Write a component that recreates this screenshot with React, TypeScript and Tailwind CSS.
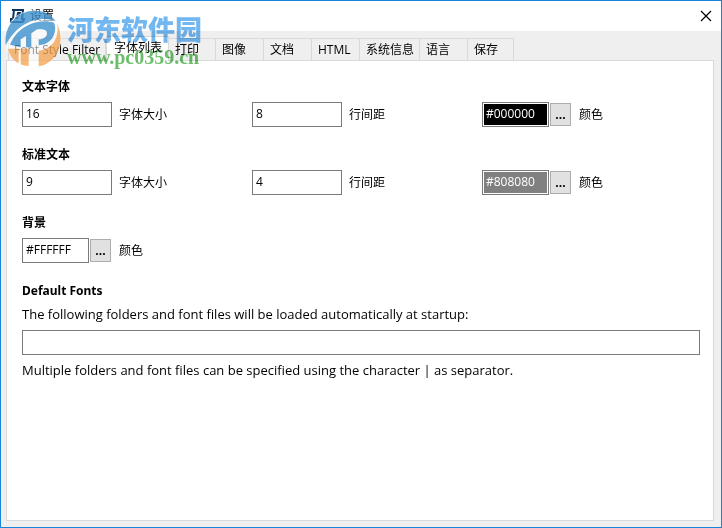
import React from 'react';

const tabs = [
  { name: 'Font Style Filter', width: 'w-[98px]' },
  { name: '字体列表', width: 'w-[63px]', active: true },
  { name: '打印', width: 'w-[47px]' },
  { name: '图像', width: 'w-[48px]' },
  { name: '文档', width: 'w-[48px]' },
  { name: 'HTML', width: 'w-[48px]' },
  { name: '系统信息', width: 'w-[60px]' },
  { name: '语言', width: 'w-[48px]' },
  { name: '保存', width: 'w-[46px]' },
];

const NumberField = ({ id, label, value }: { id: string; label: string; value: string }) => (
  <div className="flex items-center gap-[7px]">
    <input
      id={id}
      defaultValue={value}
      className="h-[25px] w-[90px] border border-[#7a7a7a] bg-white px-[3px] pb-[2px] outline-none"
    />
    <label htmlFor={id}>{label}</label>
  </div>
);

const ColorField = ({ id, value, tone }: { id: string; value: string; tone: string }) => (
  <div className="flex items-center">
    <div className="h-[25px] w-[67px] border border-[#7a7a7a] bg-white p-px">
      <input
        id={id}
        defaultValue={value}
        className={`block h-full w-full px-[2px] pb-[2px] outline-none ${tone}`}
      />
    </div>
    <button
      type="button"
      aria-label="选择颜色"
      className="ml-px h-[23px] w-[21px] border border-[#adadad] bg-[#e1e1e1] font-bold leading-4"
    >
      ...
    </button>
    <label htmlFor={id} className="ml-2">颜色</label>
  </div>
);

const Watermark = () => (
  <>
    <svg
      width="57"
      height="57"
      viewBox="15 30 171 171"
      className="pointer-events-none absolute left-1 top-[9px] z-10 opacity-80"
      aria-hidden="true"
    >
      <circle cx="100" cy="115" r="85" fill="#fff" fillOpacity="0.7" />
      <path d="M17 136C10 72 58 30 105 32c28 0 50 12 62 32C138 52 104 56 76 72 48 88 30 110 17 136z" fill="#3f93cf" />
      <path d="M30 134C42 106 62 84 92 72c24-10 50-11 70-4 8 18 2 42-14 56-10 8-20 11-32 12v-18c16 0 25-8 25-18 0-9-8-12-20-12h-9l-18 12v42H78v-34l-16 10v24z" fill="#3f93cf" />
      <path d="M172 72c20 44 10 96-34 120-8 4-16 6-22 7v-47c38-3 62-34 56-80z" fill="#f6a85a" />
      <path d="M24 146h32v44c-16-9-28-26-32-44zM62 146h24v52c-9 0-17-2-24-5z" fill="#f6a85a" />
    </svg>
    <div className="pointer-events-none absolute left-[66px] top-3 z-10 opacity-80 mix-blend-multiply">
      <div className="font-['Noto_Sans_CJK_SC',sans-serif] text-[27px] font-black leading-8 text-[#4fa5ed]">河东软件园</div>
      <div className="font-['Liberation_Serif',serif] text-[20px] font-bold leading-6 text-[#45ad45]">www.pc0359.cn</div>
    </div>
  </>
);

export default function App() {
  return (
    <div className="relative flex min-h-screen flex-col border border-[#1883d7] bg-[#efefef] font-['Open_Sans','Noto_Sans_CJK_SC',sans-serif] text-[12px] leading-4 text-black">
      {/* Title bar */}
      <header className="flex h-[30px] items-center bg-white pl-2 pr-[9px]">
        <svg width="17" height="16" viewBox="0 0 17 16" aria-hidden="true">
          <path d="M3 2h12M5 2L4 11M14 2l-1 9M1 14h13M1 11h3M2 11v3M12 11h4M15 11l-1 3" fill="none" stroke="#0b3460" strokeWidth="2" />
          <path d="M12 5H9l-1 5M8 7h3M6 10h3" fill="none" stroke="#0b3460" strokeWidth="2" />
        </svg>
        <h1 className="ml-1">设置</h1>
        <button type="button" aria-label="关闭" className="ml-auto">
          <svg width="12" height="12" viewBox="0 0 12 12">
            <path d="M1 1l10 10M11 1L1 11" stroke="#000" strokeWidth="1.2" />
          </svg>
        </button>
      </header>

      {/* Tabs */}
      <div role="tablist" className="flex items-end pl-[7px] pt-[5px]">
        {tabs.map((tab) => (
          <button
            key={tab.name}
            type="button"
            role="tab"
            aria-selected={!!tab.active}
            className={`shrink-0 whitespace-nowrap border-[#d9d9d9] text-left ${tab.width} ${
              tab.active
                ? 'z-1 -mb-px h-[25px] border-x border-t bg-white pb-[2px] pl-[7px]'
                : 'h-[22px] border-r border-t pl-[6px] first:border-l first:pl-[5px]'
            }`}
          >
            {tab.name}
          </button>
        ))}
      </div>

      {/* Font list settings */}
      <main className="mb-[6px] ml-[5px] mr-[7px] grow border border-[#d9d9d9] bg-white pb-4 pl-[15px] pr-[13px] pt-[18px]">
        <section>
          <h2 className="font-bold">文本字体</h2>
          <div className="mt-[7px] grid grid-cols-[230px_230px_1fr]">
            <NumberField id="text-size" label="字体大小" value="16" />
            <NumberField id="text-spacing" label="行间距" value="8" />
            <ColorField id="text-color" value="#000000" tone="bg-black text-white" />
          </div>
        </section>

        <section className="mt-5">
          <h2 className="font-bold">标准文本</h2>
          <div className="mt-[7px] grid grid-cols-[230px_230px_1fr]">
            <NumberField id="default-size" label="字体大小" value="9" />
            <NumberField id="default-spacing" label="行间距" value="4" />
            <ColorField id="default-color" value="#808080" tone="bg-[#808080] text-white" />
          </div>
        </section>

        <section className="mt-5">
          <h2 className="font-bold">背景</h2>
          <div className="mt-[7px]">
            <ColorField id="background" value="#FFFFFF" tone="bg-white text-black" />
          </div>
        </section>

        <section className="mt-5">
          <h2 className="font-['Noto_Sans',sans-serif] font-bold">Default Fonts</h2>
          <label htmlFor="font-folders" className="mt-[7px] block text-[13px]">
            The following folders and font files will be loaded automatically at startup:
          </label>
          <input
            id="font-folders"
            className="mt-2 block h-[25px] w-full border border-[#7a7a7a] bg-white px-[3px] outline-none"
          />
          <p className="mt-[7px] text-[13px]">
            Multiple folders and font files can be specified using the character | as separator.
          </p>
        </section>
      </main>

      <Watermark />
    </div>
  );
}
